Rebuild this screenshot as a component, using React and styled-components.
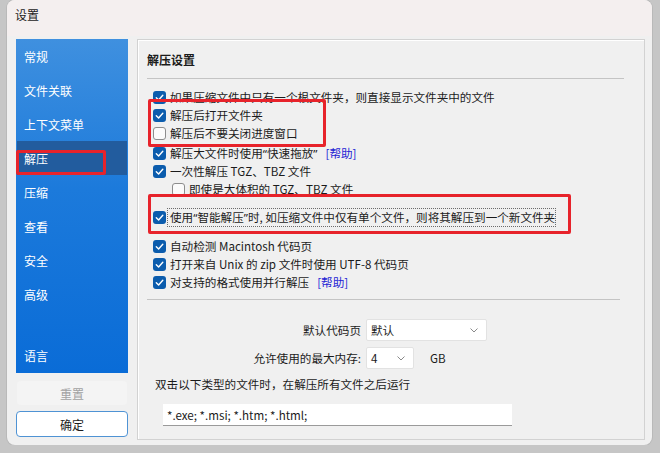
import React from "react";
import styled, { createGlobalStyle } from "styled-components";

const GlobalStyle = createGlobalStyle`
  html, body {
    margin: 0;
    padding: 0;
    background: #c6c6c6;
    font-family: "Noto Sans CJK SC", "Noto Sans", sans-serif;
    color: #1b1b1b;
  }
`;

const navItems = ["常规", "文件关联", "上下文菜单", "解压", "压缩", "查看", "安全", "高级"];

const App = () => {
  return (
    <>
      <GlobalStyle />
      <Window>
        <TitleBar>设置</TitleBar>
        <Body>
          <LeftColumn>
            <Sidebar>
              {navItems.map((item) => (
                <NavItem key={item} selected={item === "解压"}>
                  {item}
                </NavItem>
              ))}
              <NavItem bottom>语言</NavItem>
            </Sidebar>
            <ResetButton disabled>重置</ResetButton>
            <OkButton>确定</OkButton>
          </LeftColumn>

          <Panel>
            <Heading>解压设置</Heading>
            <Divider />
            <Options>
              <Option checked>如果压缩文件中只有一个根文件夹，则直接显示文件夹中的文件</Option>
              <Option checked>解压后打开文件夹</Option>
              <Option>解压后不要关闭进度窗口</Option>
              <Option checked gap={2}>
                解压大文件时使用<Quote>“</Quote>快速拖放<Quote>”</Quote>
                <Help>[帮助]</Help>
              </Option>
              <Option checked>一次性解压 TGZ、TBZ 文件</Option>
              <Option indent>即使是大体积的 TGZ、TBZ 文件</Option>
              <Option checked gap={10} focused>
                使用<Quote>“</Quote>智能解压<Quote>”</Quote>时, 如压缩文件中仅有单个文件，则将其解压到一个新文件夹
              </Option>
              <Option checked gap={11}>自动检测 Macintosh 代码页</Option>
              <Option checked>打开来自 Unix 的 zip 文件时使用 UTF-8 代码页</Option>
              <Option checked>
                对支持的格式使用并行解压<Help>[帮助]</Help>
              </Option>
            </Options>
            <Divider bottom />
            <FieldGrid>
              <FieldLabel>默认代码页</FieldLabel>
              <FieldControls>
                <Select width={121}>
                  默认
                  <Chevron />
                </Select>
              </FieldControls>
              <FieldLabel>允许使用的最大内存:</FieldLabel>
              <FieldControls>
                <Select width={48}>
                  4
                  <Chevron />
                </Select>
                <Unit>GB</Unit>
              </FieldControls>
            </FieldGrid>
            <RunLabel>双击以下类型的文件时，在解压所有文件之后运行</RunLabel>
            <TextInput>*.exe; *.msi; *.htm; *.html;</TextInput>
          </Panel>
        </Body>

        <Annotation style={{ left: 9, top: 150, width: 90, height: 25 }} />
        <Annotation style={{ left: 141, top: 99, width: 178, height: 48 }} />
        <Annotation style={{ left: 141, top: 194, width: 423, height: 40 }} />
      </Window>
    </>
  );
};

const Chevron = () => (
  <ChevronSvg viewBox="0 0 8 5" width="8" height="5">
    <path d="M0.5 0.5 L4 4 L7.5 0.5" fill="none" stroke="#8a8a8a" strokeWidth="1" />
  </ChevronSvg>
);

const Option = ({ checked, indent, gap = 0, focused, children }) => (
  <Row indent={indent} style={gap ? { marginTop: gap } : undefined}>
    <Box checked={checked}>
      {checked && (
        <svg viewBox="0 0 13 13" width="13" height="13">
          <path d="M3.3 6.8 L5.6 9 L9.8 4.3" fill="none" stroke="#fff" strokeWidth="1.4" strokeLinecap="round" strokeLinejoin="round" />
        </svg>
      )}
    </Box>
    <Label focused={focused}>{children}</Label>
  </Row>
);

const Window = styled.div`
  position: relative;
  margin-left: 7px;
  width: 645px;
  height: 445px;
  background: #f0f0f0;
  border-radius: 8px;
  box-shadow: 0 0 0 1px #b9b9b9;
  overflow: hidden;
  display: flex;
  flex-direction: column;
`;

const TitleBar = styled.div`
  height: 36px;
  flex-shrink: 0;
  background: #f4efef;
  font-size: 12px;
  line-height: 30px;
  padding-left: 8px;
`;

const Body = styled.div`
  flex: 1;
  display: flex;
  gap: 9px;
  padding: 3px 7px 5px 9px;
  min-height: 0;
`;

const LeftColumn = styled.div`
  width: 112px;
  display: flex;
  flex-direction: column;
`;

const Sidebar = styled.div`
  height: 334px;
  display: flex;
  flex-direction: column;
  background: linear-gradient(180deg, #3f90df 0%, #1c7adb 45%, #0a6cd7 100%);
  padding-bottom: 1px;
  box-sizing: border-box;
`;

const NavItem = styled.div`
  height: 34px;
  flex-shrink: 0;
  display: flex;
  align-items: center;
  padding-left: 7px;
  margin: 0 1px;
  font-size: 12px;
  color: #fff;
  background: ${(p) => (p.selected ? "#225c9e" : "transparent")};
  margin-top: ${(p) => (p.bottom ? "auto" : "0")};
`;

const ButtonBase = styled.button`
  font-family: inherit;
  font-size: 12px;
  width: 112px;
  padding: 0;
  border-radius: 4px;
`;

const ResetButton = styled(ButtonBase)`
  margin-top: 8px;
  height: 24px;
  margin-left: 1px;
  width: 110px;
  background: #f4f4f4;
  border: none;
  color: #a2a2a2;
`;

const OkButton = styled(ButtonBase)`
  margin-top: 6px;
  height: 26px;
  background: #fff;
  border: 1px solid #4f93d4;
  color: #1b1b1b;
`;

const Panel = styled.div`
  flex: 1;
  border: 1px solid #d2d2d2;
  box-shadow: inset 1px 1px 0 #fff;
  padding: 0 20px 0 9px;
  display: flex;
  flex-direction: column;
`;

const Heading = styled.div`
  font-size: 12px;
  font-weight: bold;
  line-height: 16px;
  margin-top: 12px;
`;

const Divider = styled.div`
  height: 1px;
  background: #c4c4c4;
  margin-top: ${(p) => (p.bottom ? "8px" : "10px")};
  margin-right: ${(p) => (p.bottom ? "4px" : "0")};
`;

const Options = styled.div`
  display: flex;
  flex-direction: column;
  margin-top: 9px;
`;

const Row = styled.div`
  height: 18px;
  display: flex;
  align-items: center;
  padding-left: ${(p) => (p.indent ? "25px" : "6px")};
  font-size: 11.6px;
`;

const Box = styled.span`
  width: 13px;
  height: 13px;
  box-sizing: border-box;
  border-radius: 3px;
  flex-shrink: 0;
  display: flex;
  background: ${(p) => (p.checked ? "#0b5cad" : "#fbfbfb")};
  border: ${(p) => (p.checked ? "none" : "1px solid #8d8d8d")};
`;

const Label = styled.span`
  margin-left: ${(p) => (p.focused ? "1px" : "4px")};
  padding: ${(p) => (p.focused ? "0 0 0 2px" : "0")};
  border: ${(p) => (p.focused ? "1px dotted #6b6b6b" : "none")};
  line-height: 17px;
  white-space: nowrap;
`;

const Quote = styled.span`
  font-family: "Noto Sans", "DejaVu Sans", sans-serif;
`;

const Help = styled.span`
  color: #2424d4;
  margin-left: 8px;
`;

const FieldGrid = styled.div`
  display: grid;
  grid-template-columns: 214px 1fr;
  column-gap: 5px;
  row-gap: 6px;
  align-items: center;
  margin-top: 19px;
  font-size: 11.6px;
`;

const FieldLabel = styled.span`
  text-align: right;
`;

const FieldControls = styled.div`
  display: flex;
  align-items: center;
  gap: 16px;
`;

const Select = styled.div`
  width: ${(p) => p.width}px;
  height: 22px;
  box-sizing: border-box;
  background: #fff;
  border: 1px solid #e2e2e2;
  border-radius: 2px;
  display: flex;
  align-items: center;
  justify-content: space-between;
  padding: 0 8px 0 4px;
`;

const ChevronSvg = styled.svg`
  display: block;
`;

const Unit = styled.span``;

const RunLabel = styled.div`
  font-size: 11.6px;
  margin-top: 6px;
  padding-left: 8px;
  line-height: 18px;
`;

const TextInput = styled.div`
  margin: 11px 0 0 16px;
  width: 349px;
  height: 22px;
  box-sizing: border-box;
  background: #fff;
  border-bottom: 1px solid #9a9a9a;
  font-size: 11.6px;
  display: flex;
  align-items: center;
  padding-left: 4px;
`;

const Annotation = styled.div`
  position: absolute;
  box-sizing: border-box;
  border: 3px solid #e7232b;
  border-radius: 2px;
  pointer-events: none;
`;

export default App;
